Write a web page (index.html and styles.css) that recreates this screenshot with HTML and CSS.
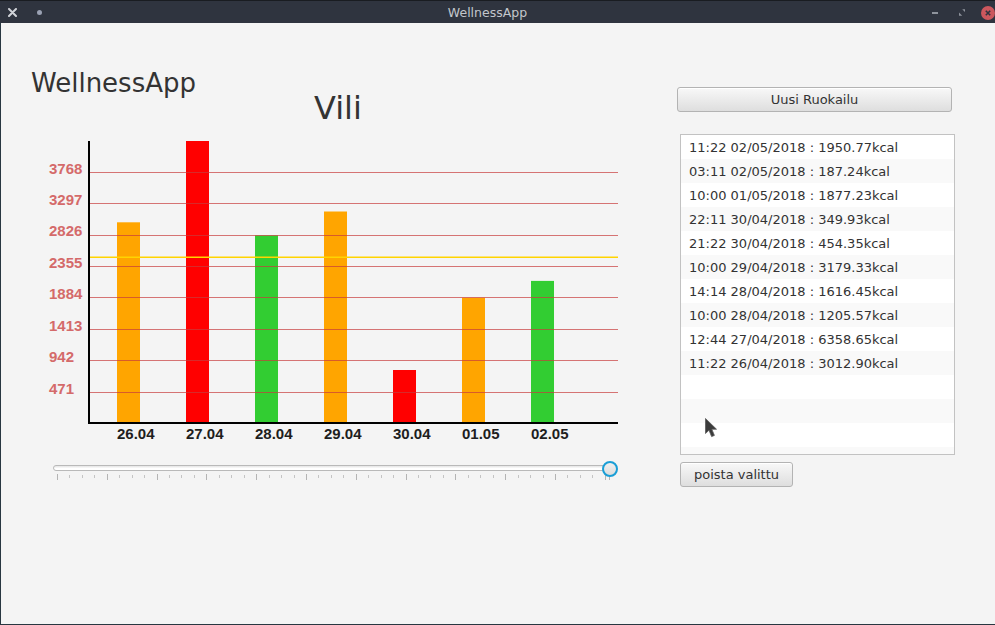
FILE: index.html
```html
<!DOCTYPE html>
<html lang="fi">
<head>
<meta charset="utf-8">
<title>WellnessApp</title>
<link rel="stylesheet" href="styles.css">
</head>
<body>
<div class="window">
  <div class="titlebar">
    <div class="tb-left">
      <svg class="tb-x" width="9" height="9" viewBox="0 0 9 9"><path d="M1 1L8 8M8 1L1 8" stroke="#d0d3d8" stroke-width="2" stroke-linecap="round"/></svg>
      <span class="tb-dot"></span>
    </div>
    <div class="tb-title">WellnessApp</div>
    <div class="tb-right">
      <span class="tb-min"></span>
      <svg class="tb-restore" width="7" height="7" viewBox="0 0 7 7"><path d="M3.5 0H7V3.5Z M0 3.5V7H3.5Z" fill="#8e939c"/></svg>
      <svg class="tb-close" width="14" height="14" viewBox="0 0 14 14"><circle cx="7" cy="7" r="7" fill="#cc575d"/><path d="M4.8 4.8L9.2 9.2M9.2 4.8L4.8 9.2" stroke="#2f343f" stroke-width="1.6"/></svg>
    </div>
  </div>
  <div class="content">
    <div class="left">
      <h1 class="app-title">WellnessApp</h1>
      <h2 class="chart-title">Vili</h2>
      <svg class="chart" width="590" height="320" viewBox="0 0 590 320">
        <g class="bars">
          <rect x="77" y="92.3" width="23" height="200" fill="#ffa500"/>
          <rect x="146" y="11" width="23" height="281" fill="#ff0000"/>
          <rect x="215" y="105.3" width="23" height="187" fill="#32cd32"/>
          <rect x="284" y="81.5" width="23" height="211" fill="#ffa500"/>
          <rect x="353" y="240" width="23" height="52" fill="#ff0000"/>
          <rect x="422" y="167.7" width="23" height="124.5" fill="#ffa500"/>
          <rect x="491" y="150.9" width="23" height="141.3" fill="#32cd32"/>
        </g>
        <g class="grid" stroke="rgb(200,60,60)" stroke-opacity="0.7" stroke-width="1">
          <line x1="50" x2="578" y1="42.5" y2="42.5"/>
          <line x1="50" x2="578" y1="73.5" y2="73.5"/>
          <line x1="50" x2="578" y1="105.5" y2="105.5"/>
          <line x1="50" x2="578" y1="136.5" y2="136.5"/>
          <line x1="50" x2="578" y1="167.5" y2="167.5"/>
          <line x1="50" x2="578" y1="199.5" y2="199.5"/>
          <line x1="50" x2="578" y1="230.5" y2="230.5"/>
          <line x1="50" x2="578" y1="262.5" y2="262.5"/>
        </g>
        <line x1="50" x2="578" y1="127.3" y2="127.3" stroke="#ffd400" stroke-width="1.6"/>
        <g class="ylabels">
          <text x="9" y="43.5">3768</text>
          <text x="9" y="74.5">3297</text>
          <text x="9" y="106">2826</text>
          <text x="9" y="137.5">2355</text>
          <text x="9" y="169">1884</text>
          <text x="9" y="200.5">1413</text>
          <text x="9" y="232">942</text>
          <text x="9" y="263.5">471</text>
        </g>
        <line x1="49" x2="49" y1="11" y2="294" stroke="#000" stroke-width="2"/>
        <line x1="48" x2="578" y1="293" y2="293" stroke="#000" stroke-width="2"/>
        <g class="xlabels">
          <text x="77" y="309">26.04</text>
          <text x="146" y="309">27.04</text>
          <text x="215" y="309">28.04</text>
          <text x="284" y="309">29.04</text>
          <text x="353" y="309">30.04</text>
          <text x="422" y="309">01.05</text>
          <text x="491" y="309">02.05</text>
        </g>
      </svg>
      <div class="slider">
        <div class="track"></div>
        <div class="ticks"></div>
        <div class="thumb"></div>
      </div>
    </div>
    <div class="right">
      <button class="btn btn-wide">Uusi Ruokailu</button>
      <ul class="list">
        <li>11:22 02/05/2018 : 1950.77kcal</li>
        <li>03:11 02/05/2018 : 187.24kcal</li>
        <li>10:00 01/05/2018 : 1877.23kcal</li>
        <li>22:11 30/04/2018 : 349.93kcal</li>
        <li>21:22 30/04/2018 : 454.35kcal</li>
        <li>10:00 29/04/2018 : 3179.33kcal</li>
        <li>14:14 28/04/2018 : 1616.45kcal</li>
        <li>10:00 28/04/2018 : 1205.57kcal</li>
        <li>12:44 27/04/2018 : 6358.65kcal</li>
        <li>11:22 26/04/2018 : 3012.90kcal</li>
        <li></li>
        <li></li>
        <li></li>
        <li></li>
      </ul>
      <button class="btn btn-small">poista valittu</button>
    </div>
  </div>
  <svg class="cursor" width="14" height="21" viewBox="0 0 14 21"><path d="M0.5 0.5V15.5L4 12.2L6.6 18.6L9.4 17.4L6.8 11.2H11.5Z" fill="#3b3b3b" stroke="#5a5a5a" stroke-width="0.8" stroke-linejoin="round"/></svg>
</div>
</body>
</html>
```

FILE: styles.css
```css
* { box-sizing: border-box; }

body {
  margin: 0;
  background: #1b1e24;
  font-family: "DejaVu Sans", sans-serif;
}

.window {
  width: 995px;
  height: 625px;
  display: flex;
  flex-direction: column;
  position: relative;
  overflow: hidden;
}

.titlebar {
  height: 23px;
  flex: none;
  display: flex;
  align-items: center;
  background: #2f343f;
  border-top: 1px solid #191c21;
  padding-top: 1px;
}

.tb-left {
  width: 60px;
  display: flex;
  align-items: center;
  padding-left: 8px;
}

.tb-x { display: block; }

.tb-dot {
  width: 5px;
  height: 5px;
  border-radius: 50%;
  background: #9aa1b3;
  margin-left: 20px;
}

.tb-title {
  flex: 1;
  text-align: center;
  color: #c3c6cc;
  font-size: 12.5px;
}

.tb-right {
  width: 80px;
  display: flex;
  align-items: center;
  padding-left: 17px;
}

.tb-min {
  width: 6px;
  height: 2px;
  background: #8e939c;
}

.tb-restore { display: block; margin-left: 21px; }
.tb-close { display: block; margin-left: 16px; flex: none; }

.content {
  flex: 1;
  display: flex;
  background: #f4f4f4;
  border-left: 1px solid #283741;
  border-bottom: 1px solid #283741;
}

.left {
  width: 676px;
  flex: none;
  padding-left: 30px;
}

.app-title {
  margin: 47px 0 0;
  font-size: 26px;
  line-height: 26px;
  font-weight: normal;
  color: #333;
}

.chart-title {
  margin: -4px 0 0 283px;
  font-size: 32px;
  line-height: 32px;
  font-weight: normal;
  color: #333;
}

.chart {
  display: block;
  margin: 6px 0 0 9px;
}

.ylabels text {
  font-family: "Liberation Sans", sans-serif;
  font-weight: bold;
  font-size: 15px;
  fill: #d46a6a;
}

.xlabels text {
  font-family: "Liberation Sans", sans-serif;
  font-weight: bold;
  font-size: 15px;
  fill: #1e1e1e;
}

.slider {
  position: relative;
  margin: 10px 0 0 22px;
  padding-top: 5px;
  width: 565px;
  height: 22px;
}

.track {
  height: 6px;
  width: 559px;
  border: 1px solid #b9b9b9;
  border-radius: 3px;
  background: linear-gradient(#e4e4e4, #ffffff 60%);
}

.ticks {
  margin: 3px 0 0 4px;
  width: 553px;
  height: 6px;
  border-right: 1px solid #b4b4b4;
  background:
    repeating-linear-gradient(to right, #b4b4b4 0 1px, transparent 1px 49.8px),
    repeating-linear-gradient(to right, #c4c4c4 0 1px, transparent 1px 12.45px) 0 1px / 100% 3px no-repeat;
}

.thumb {
  position: absolute;
  left: 549px;
  top: 1px;
  width: 16px;
  height: 16px;
  border-radius: 50%;
  border: 2px solid #1a9ed6;
  background: linear-gradient(#f0f0f0, #dcdcdc);
}

.right {
  width: 278px;
  flex: none;
  padding-top: 64px;
}

.btn {
  display: block;
  height: 25px;
  padding: 0;
  margin: 0;
  font-family: "DejaVu Sans", sans-serif;
  font-size: 13px;
  line-height: 23px;
  color: #333;
  border: 1px solid #b3b3b3;
  border-radius: 3px;
  background: linear-gradient(#f8f8f8, #dedede);
  box-shadow: inset 0 1px 0 #ffffff;
}

.btn-wide { width: 275px; }

.btn-small {
  width: 113px;
  margin: 7px 0 0 3px;
}

.list {
  list-style: none;
  margin: 22px 0 0 3px;
  padding: 0;
  width: 275px;
  height: 321px;
  border: 1px solid #c2c2c2;
  background: #fff;
  overflow: hidden;
}

.list li {
  height: 24px;
  padding: 1px 0 0 8px;
  font-size: 13px;
  line-height: 23px;
  color: #333;
  white-space: nowrap;
  background: #ffffff;
}

.list li:nth-child(even) { background: #f9f9f9; }

.cursor {
  position: absolute;
  left: 705px;
  top: 418px;
}
```
